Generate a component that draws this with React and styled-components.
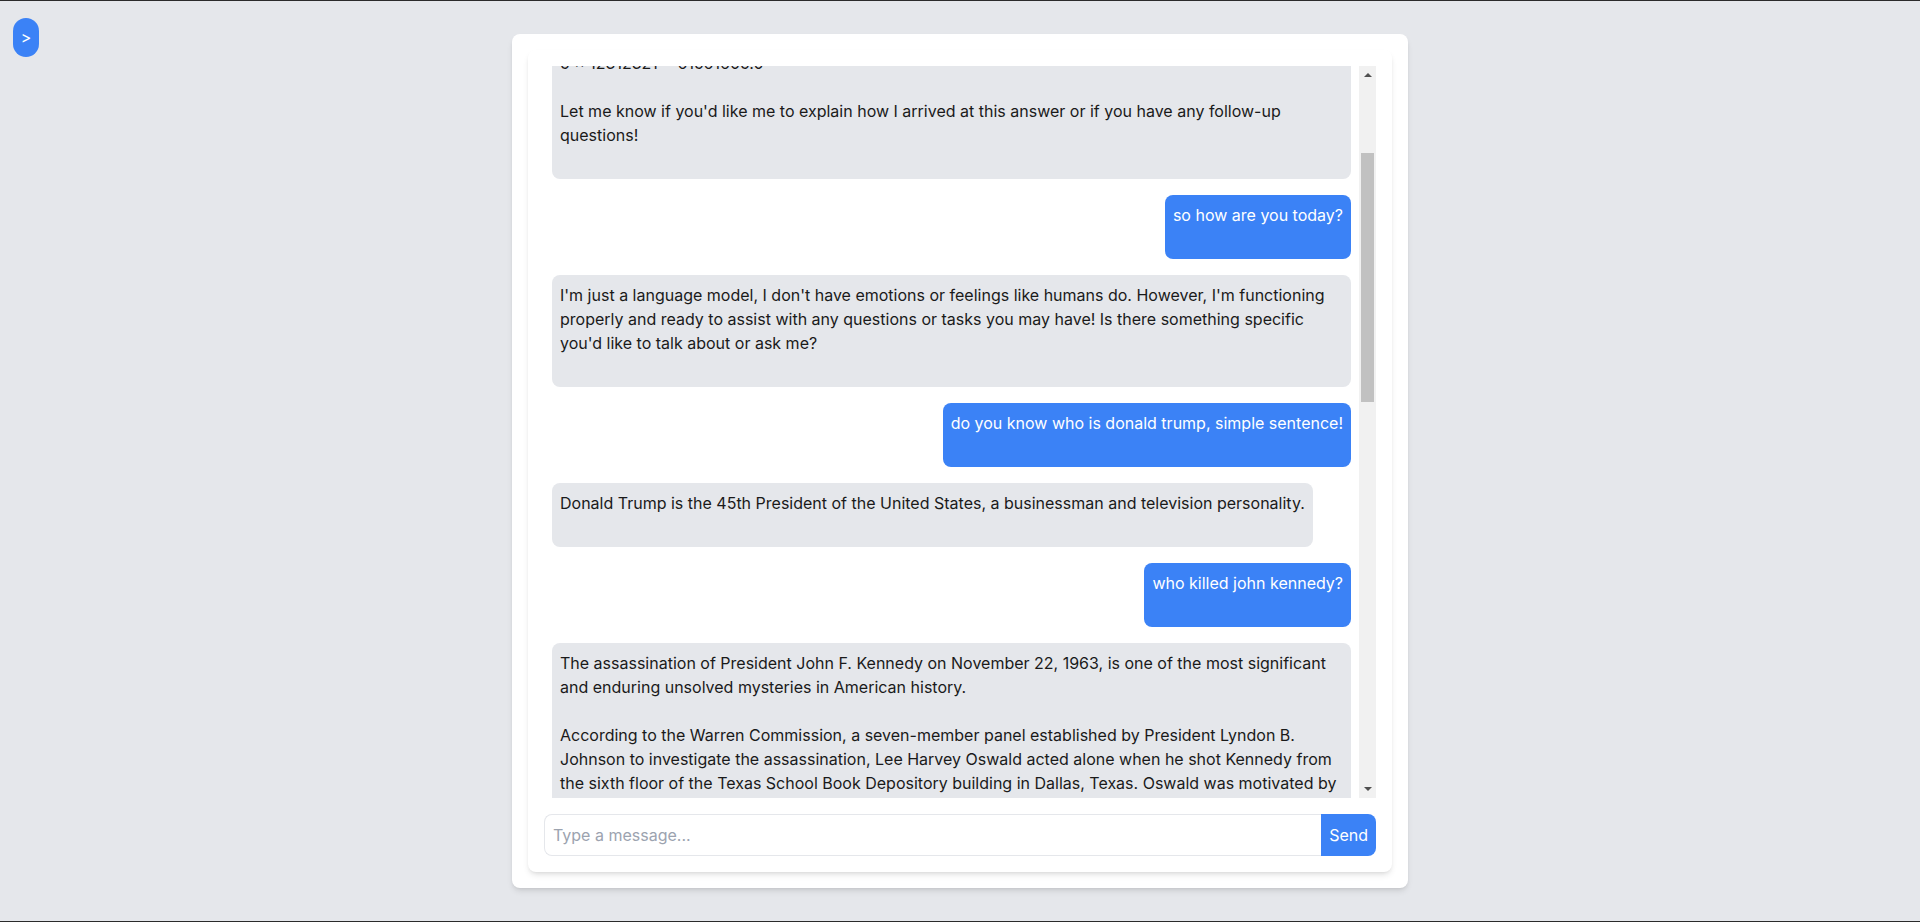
import React, { useLayoutEffect, useRef, useState } from "react";
import styled, { createGlobalStyle } from "styled-components";

const GlobalStyle = createGlobalStyle`
  * {
    box-sizing: border-box;
  }
  body {
    margin: 0;
    background: #e5e7eb;
    font-family: Inter, "Noto Sans", "Liberation Sans", sans-serif;
    color: #111111;
  }
`;

const Page = styled.div`
  height: 100vh;
  display: flex;
  justify-content: center;
  padding: 33px 0;
  border-top: 1px solid #2b2b2b;
  border-bottom: 1px solid #2b2b2b;
`;

const ToggleButton = styled.button`
  position: fixed;
  top: 18px;
  left: 13px;
  padding: 8px;
  width: 26px;
  height: 39px;
  border: none;
  border-radius: 9999px;
  background: #3b82f6;
  color: #ffffff;
  font-family: Inter, sans-serif;
  font-size: 16px;
  line-height: 23px;
  display: flex;
  align-items: center;
  justify-content: center;
  cursor: pointer;
`;

const Card = styled.div`
  width: 896px;
  display: flex;
  flex-direction: column;
  padding: 16px;
  background: #ffffff;
  border-radius: 8px;
  box-shadow: 0 4px 6px -1px rgba(0, 0, 0, 0.1), 0 2px 4px -2px rgba(0, 0, 0, 0.1);
`;

const ChatPanel = styled.div`
  flex: 1;
  min-height: 0;
  display: flex;
  flex-direction: column;
  padding: 16px;
  background: #ffffff;
  border-radius: 8px;
  box-shadow: 0 4px 6px -1px rgba(0, 0, 0, 0.1), 0 2px 4px -2px rgba(0, 0, 0, 0.1);
`;

const ScrollArea = styled.div`
  flex: 1;
  min-height: 0;
  display: flex;
`;

const MessageList = styled.div`
  position: relative;
  flex: 1;
  min-width: 0;
  overflow-y: auto;
  padding: 8px;
  display: flex;
  flex-direction: column;
  gap: 16px;
  scrollbar-width: none;

  &::-webkit-scrollbar {
    display: none;
  }
`;

const ScrollRail = styled.div`
  width: 17px;
  flex-shrink: 0;
  display: flex;
  flex-direction: column;
  background: #f1f1f1;
`;

const ArrowButton = styled.div`
  height: 17px;
  flex-shrink: 0;
  display: flex;
  align-items: center;
  justify-content: center;

  &::before {
    content: "";
    width: 0;
    height: 0;
    border-left: 4px solid transparent;
    border-right: 4px solid transparent;
    ${(p) =>
      p.$down
        ? "border-top: 4px solid #505050; margin-top: -2px;"
        : "border-bottom: 4px solid #505050; margin-top: 1px;"}
  }
`;

const Track = styled.div`
  flex: 1;
  min-height: 0;
  padding: 0 2px;
`;

const Thumb = styled.div`
  background: #c1c1c1;
`;

const Bubble = styled.div`
  flex-shrink: 0;
  align-self: ${(p) => (p.$user ? "flex-end" : "flex-start")};
  max-width: 100%;
  padding: 8px 8px 32px;
  border-radius: 8px;
  background: ${(p) => (p.$user ? "#3b82f6" : "#e5e7eb")};
  color: ${(p) => (p.$user ? "#ffffff" : "#1a1a1a")};
  font-size: 16px;
  line-height: 24px;
  white-space: pre-wrap;
`;

const InputRow = styled.form`
  display: flex;
  margin-top: 16px;
`;

const MessageInput = styled.input`
  flex: 1;
  min-width: 0;
  padding: 8px;
  border: 1px solid #e5e7eb;
  border-right: none;
  border-radius: 8px 0 0 8px;
  font-family: Inter, sans-serif;
  font-size: 16px;
  line-height: 24px;
  color: #111111;
  outline: none;

  &::placeholder {
    color: #9ca3af;
  }
`;

const SendButton = styled.button`
  padding: 8px;
  border: none;
  border-radius: 0 8px 8px 0;
  background: #3b82f6;
  color: #ffffff;
  font-family: Inter, sans-serif;
  font-size: 16px;
  line-height: 24px;
  cursor: pointer;
`;

const messages = [
  { user: true, text: "what is 12312321 * 5?" },
  {
    user: false,
    text:
      "A simple multiplication problem!\n\nTo calculate this, I'll multiply 12312321 by 5:\n\n5 × 12312321 = 61561605.0\n\nLet me know if you'd like me to explain how I arrived at this answer or if you have any follow-up questions!",
  },
  { user: true, text: "so how are you today?", anchor: true },
  {
    user: false,
    text:
      "I'm just a language model, I don't have emotions or feelings like humans do. However, I'm functioning properly and ready to assist with any questions or tasks you may have! Is there something specific you'd like to talk about or ask me?",
  },
  { user: true, text: "do you know who is donald trump, simple sentence!" },
  {
    user: false,
    text: "Donald Trump is the 45th President of the United States, a businessman and television personality.",
  },
  { user: true, text: "who killed john kennedy?" },
  {
    user: false,
    text:
      "The assassination of President John F. Kennedy on November 22, 1963, is one of the most significant and enduring unsolved mysteries in American history.\n\n" +
      "According to the Warren Commission, a seven-member panel established by President Lyndon B. Johnson to investigate the assassination, Lee Harvey Oswald acted alone when he shot Kennedy from the sixth floor of the Texas School Book Depository building in Dallas, Texas. Oswald was motivated by a desire for notoriety and had a history of mental instability and anti-government sentiments.\n\n" +
      "However, many people have questioned the findings of the Warren Commission over the years, and numerous conspiracy theories have emerged. Some of the most popular theories include:\n\n" +
      "1. **The Mafia**: Some believe that organized crime figures, such as Carlos Marcello or Santo Trafficante, were involved in the assassination due to Kennedy's efforts to crack down on organized crime.\n" +
      "2. **The CIA**: Another theory suggests that rogue elements within the CIA were responsible, possibly in retaliation for Kennedy's handling of the Bay of Pigs invasion and his plans to reform the agency.\n" +
      "3. **Cuba**: Some have speculated that Fidel Castro's government was behind the assassination in response to U.S. attempts to overthrow or assassinate Castro himself.\n" +
      "4. **The Soviet Union**: Oswald had defected to the Soviet Union in 1959 and returned to the United States in 1962, which led some to suspect Soviet involvement.\n" +
      "5. **Multiple shooters**: Many witnesses reported hearing shots from the grassy knoll in Dealey Plaza, leading to theories that a second gunman was involved.\n" +
      "6. **The military-industrial complex**: Some theorists argue that powerful defense interests opposed Kennedy's plans to reduce U.S. involvement in Vietnam.\n\n" +
      "In 1979, the House Select Committee on Assassinations (HSCA) concluded that Kennedy was \"probably assassinated as a result of a conspiracy,\" based largely on acoustic evidence suggesting that a second gunman may have fired from the grassy knoll. However, this acoustic evidence was later disputed by the National Academy of Sciences.\n\n" +
      "Other notable events surrounding the assassination include:\n\n" +
      "* Oswald was arrested later that day, but he was himself shot and killed two days later by Jack Ruby, a Dallas nightclub owner, while being transferred to the county jail.\n" +
      "* The Zapruder film, a home movie shot by Abraham Zapruder, captured the assassination and has been analyzed extensively by investigators and researchers.\n" +
      "* The Warren Commission's \"single-bullet theory,\" which holds that one bullet caused non-fatal wounds to both Kennedy and Texas Governor John Connally, remains highly controversial.\n" +
      "* Many documents related to the assassination were sealed for decades and have only recently been released by the National Archives, fueling further debate.\n\n" +
      "Despite decades of investigation and analysis, the exact circumstances surrounding Kennedy's assassination remain a topic of debate and speculation. While the official conclusion is that Oswald acted alone, many people continue to believe that there was a larger conspiracy at play.\n\n" +
      "It's worth noting that in 2017 and 2022, thousands of previously classified documents were released, though most historians agree they did not substantially change the understanding of the events of that day.\n\n" +
      "If you'd like, I can go into more detail about any of these theories or the evidence surrounding the assassination.",
  },
];

const ARROW = 17;

const App = () => {
  const listRef = useRef(null);
  const anchorRef = useRef(null);
  const [thumb, setThumb] = useState({ top: 0, height: 0 });

  useLayoutEffect(() => {
    const list = listRef.current;
    if (!list || !anchorRef.current) return;
    list.scrollTop = anchorRef.current.offsetTop - 129;
    const update = () => {
      const track = list.clientHeight - ARROW * 2;
      const ratio = list.clientHeight / list.scrollHeight;
      const height = Math.max(20, Math.round(track * ratio));
      const range = list.scrollHeight - list.clientHeight;
      const top = range > 0 ? Math.round((list.scrollTop / range) * (track - height)) : 0;
      setThumb({ top, height });
    };
    update();
    list.addEventListener("scroll", update);
    return () => list.removeEventListener("scroll", update);
  }, []);

  return (
    <>
      <GlobalStyle />
      <Page>
        <ToggleButton type="button">&gt;</ToggleButton>
        <Card>
          <ChatPanel>
            <ScrollArea>
              <MessageList ref={listRef}>
                {messages.map((m, i) => (
                  <Bubble key={i} $user={m.user} ref={m.anchor ? anchorRef : undefined}>
                    {m.text}
                  </Bubble>
                ))}
              </MessageList>
              <ScrollRail>
                <ArrowButton />
                <Track>
                  <Thumb style={{ marginTop: thumb.top, height: thumb.height }} />
                </Track>
                <ArrowButton $down />
              </ScrollRail>
            </ScrollArea>
            <InputRow onSubmit={(e) => e.preventDefault()}>
              <MessageInput type="text" placeholder="Type a message..." />
              <SendButton type="submit">Send</SendButton>
            </InputRow>
          </ChatPanel>
        </Card>
      </Page>
    </>
  );
};

export default App;
